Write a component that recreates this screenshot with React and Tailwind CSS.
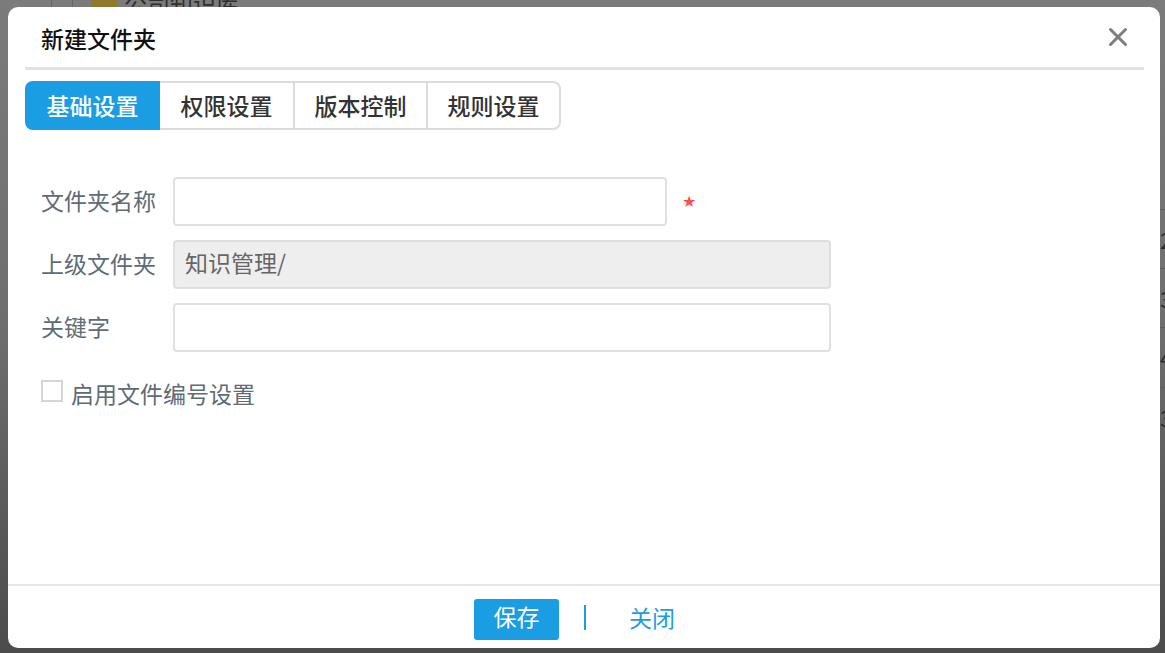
import { X } from "lucide-react"

const tabs = ["基础设置", "权限设置", "版本控制", "规则设置"]
const tabWidths = ["w-[135px]", "w-[135px]", "w-[133px]", "w-[131px]"]
const fontStack = "font-['Noto_Sans_CJK_SC','Noto_Sans',sans-serif]"

const Field = ({ label, children, className = "" }) => (
    <div className={`flex items-center ${className}`}>
        <label className="w-[165px] shrink-0 pl-[33px] pb-[4px] text-[23px] leading-[30px] text-[#5f6b75]">{label}</label>
        {children}
    </div>
)

const App = () => {
    return (
        <div className={`relative w-[1165px] h-[653px] overflow-hidden bg-gradient-to-b from-[#7b7b7b] via-[#6e6e6e] to-[#4c4c4c] pt-[7px] pl-[8px] pr-[5px] pb-[5px] ${fontStack}`}>
            {/* page behind the overlay */}
            <div className="absolute left-[51px] top-0 w-[22px] h-[7px] border-x border-[#666]" />
            <div className="absolute left-[91px] -top-[12px] flex items-center gap-[7px]">
                <div className="w-[26px] h-[20px] bg-[#8f7a2c]" />
                <span className="text-[23px] leading-[30px] text-[#2f2f2f]">公司知识库</span>
            </div>
            <div className="absolute left-[1160px] top-[209px] w-[5px] text-[22px] leading-[59px] text-[#2d2d2d]">
                <div className="h-[59px] border-t border-[#5c5c5c]">2</div>
                <div className="h-[59px] border-t border-[#5c5c5c]">3</div>
                <div className="h-[60px] border-t border-[#5c5c5c]">4</div>
                <div className="h-[59px] border-t border-[#5c5c5c]">3</div>
            </div>

            <div className="relative flex flex-col h-full bg-white rounded-[10px] overflow-hidden">
                <div className="relative h-[63px] ml-[17px] mr-[16px] border-b-[3px] border-[#e2e2e2]">
                    <h1 className="pl-[16px] pt-[14px] text-[23px] leading-[34px] font-medium text-[#111]">新建文件夹</h1>
                    <X size={30} strokeWidth={2.4} className="absolute right-[11px] top-[15px] text-[#7d7d7d]" />
                </div>

                <div className="flex w-fit ml-[17px] mt-[11px] h-[49px] rounded-[8px] border-2 border-[#dcdcdc] border-l-0">
                    {tabs.map((tab, i) => (
                        <div
                            key={tab}
                            className={
                                i === 0
                                    ? `${tabWidths[i]} -my-[2px] flex items-center justify-center rounded-l-[8px] bg-[#1a9de3] text-[23px] font-medium text-white`
                                    : `${tabWidths[i]} flex items-center justify-center text-[23px] font-medium text-[#333] ${i < 3 ? "border-r-2 border-[#dcdcdc]" : ""}`
                            }
                        >
                            {tab}
                        </div>
                    ))}
                </div>

                <div className="flex-1 pt-[47px]">
                    <Field label="文件夹名称">
                        <div className="w-[494px] h-[49px] rounded-[4px] border-2 border-[#e0e0e0] bg-white" />
                        <span className="ml-[15px] font-['DejaVu_Sans'] text-[16px] leading-[20px] text-[#ff4d4d]">★</span>
                    </Field>
                    <Field label="上级文件夹" className="mt-[14px]">
                        <div className="w-[658px] h-[49px] flex items-center pl-[10px] pb-[4px] rounded-[4px] border-2 border-[#dfdfdf] bg-[#eeeeee] text-[23px] text-[#666]">知识管理/</div>
                    </Field>
                    <Field label="关键字" className="mt-[14px]">
                        <div className="w-[658px] h-[49px] rounded-[4px] border-2 border-[#e0e0e0] bg-white" />
                    </Field>
                    <div className="flex items-start mt-[28px] pl-[33px]">
                        <div className="w-[22px] h-[22px] border-2 border-[#d6d6d6] bg-white" />
                        <span className="ml-[8px] -mt-[2px] text-[23px] leading-[30px] text-[#5f6b75]">启用文件编号设置</span>
                    </div>
                </div>

                <div className="h-[64px] flex items-start border-t-2 border-[#e6e6e6] pl-[466px]">
                    <button className="w-[85px] h-[41px] mt-[13px] pb-[6px] rounded-[3px] bg-[#1a9de3] text-[23px] text-white">保存</button>
                    <div className="w-[2px] h-[25px] mt-[19px] ml-[25px] bg-[#1a9de3]" />
                    <span className="ml-[43px] mt-[14px] text-[23px] leading-[34px] text-[#1a9de3]">关闭</span>
                </div>
            </div>
        </div>
    )
}

export default App
